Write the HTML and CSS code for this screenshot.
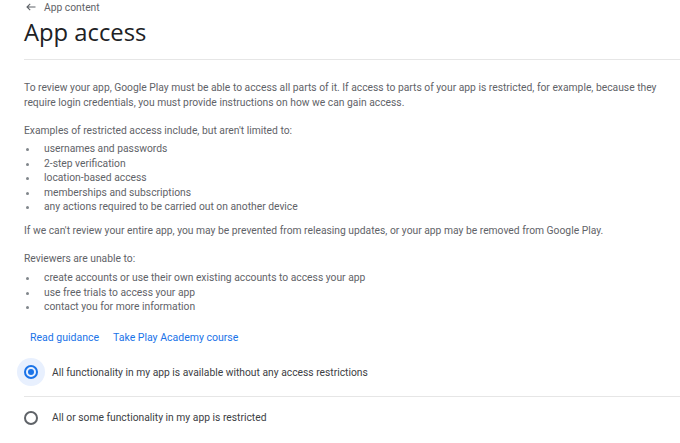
FILE: index.html
```html
<!DOCTYPE html>
<html>
<head>
<meta charset="utf-8">
<link rel="stylesheet" href="styles.css">
</head>
<body>
<div class="page">
  <div class="back">
    <svg class="arrow" width="10" height="8" viewBox="0 0 10 8"><path d="M9.5 4H1M4.2 0.8L1 4l3.2 3.2" fill="none" stroke="#5f6368" stroke-width="1.1"/></svg>
    <span>App content</span>
  </div>
  <h1 class="title">App access</h1>
  <div class="content">
    <p class="para p1">To review your app, Google Play must be able to access all parts of it. If access to parts of your app is restricted, for example, because they require login credentials, you must provide instructions on how we can gain access.</p>
    <p class="para p2">Examples of restricted access include, but aren't limited to:</p>
    <ul class="list l1">
      <li>usernames and passwords</li>
      <li>2-step verification</li>
      <li>location-based access</li>
      <li>memberships and subscriptions</li>
      <li>any actions required to be carried out on another device</li>
    </ul>
    <p class="para p3">If we can't review your entire app, you may be prevented from releasing updates, or your app may be removed from Google Play.</p>
    <p class="para p4">Reviewers are unable to:</p>
    <ul class="list l2">
      <li>create accounts or use their own existing accounts to access your app</li>
      <li>use free trials to access your app</li>
      <li>contact you for more information</li>
    </ul>
    <div class="links"><a class="link">Read guidance</a><a class="link">Take Play Academy course</a></div>
  </div>
  <div class="options">
    <div class="option selected">
      <span class="radio-wrap"><span class="radio on"></span></span>
      <span class="label">All functionality in my app is available without any access restrictions</span>
    </div>
    <div class="option">
      <span class="radio-wrap"><span class="radio"></span></span>
      <span class="label">All or some functionality in my app is restricted</span>
    </div>
  </div>
</div>
</body>
</html>
```
FILE: styles.css
```css
* { box-sizing: border-box; }
html, body { margin: 0; padding: 0; background: #fff; }
body { font-family: Roboto, "Noto Sans", sans-serif; color: #5f6368; }
.page { padding-left: 24px; }
.back { display: flex; align-items: center; gap: 8px; height: 14px; font-size: 10.3px; color: #5f6368; padding-left: 2px; }
.arrow { display: block; }
.title { margin: 3px 0 0 0; font-family: "Open Sans", Roboto, sans-serif; font-weight: 400; font-size: 23.8px; line-height: 30px; color: #202124; padding-bottom: 12px; border-bottom: 1px solid #e6e6e6; }
.content { padding-top: 21px; font-size: 10.3px; line-height: 14.5px; }
.para { margin: 0; padding-right: 16px; }
.p2 { margin-top: 14px; }
.l1 { margin-top: 3.5px; }
.p3 { margin-top: 9.5px; }
.p4 { margin-top: 13.5px; }
.l2 { margin-top: 4.5px; }
.list { list-style: none; margin-bottom: 0; padding: 0; }
.list li { position: relative; padding-left: 20px; }
.list li::before { content: ""; position: absolute; left: 2px; top: 6px; width: 3px; height: 3px; border-radius: 50%; background: #80868b; }
.links { display: flex; gap: 14px; padding-left: 6px; margin-top: 16.5px; font-size: 10.5px; }
.link { color: #1a73e8; text-decoration: none; }
.options { margin-top: 3px; }
.option { display: flex; align-items: center; gap: 7px; height: 42px; font-size: 10.3px; color: #3c4043; }
.option.selected { border-bottom: 1px solid #e6e6e6; height: 48px; }
.radio-wrap { width: 28px; height: 28px; margin-left: -7px; border-radius: 50%; display: flex; align-items: center; justify-content: center; }
.selected .radio-wrap { background: #e8f0fe; }
.radio { width: 14px; height: 14px; border: 2px solid #5f6368; border-radius: 50%; display: flex; align-items: center; justify-content: center; }
.radio.on { border-color: #1a73e8; }
.radio.on::after { content: ""; width: 6px; height: 6px; border-radius: 50%; background: #1a73e8; }
```
